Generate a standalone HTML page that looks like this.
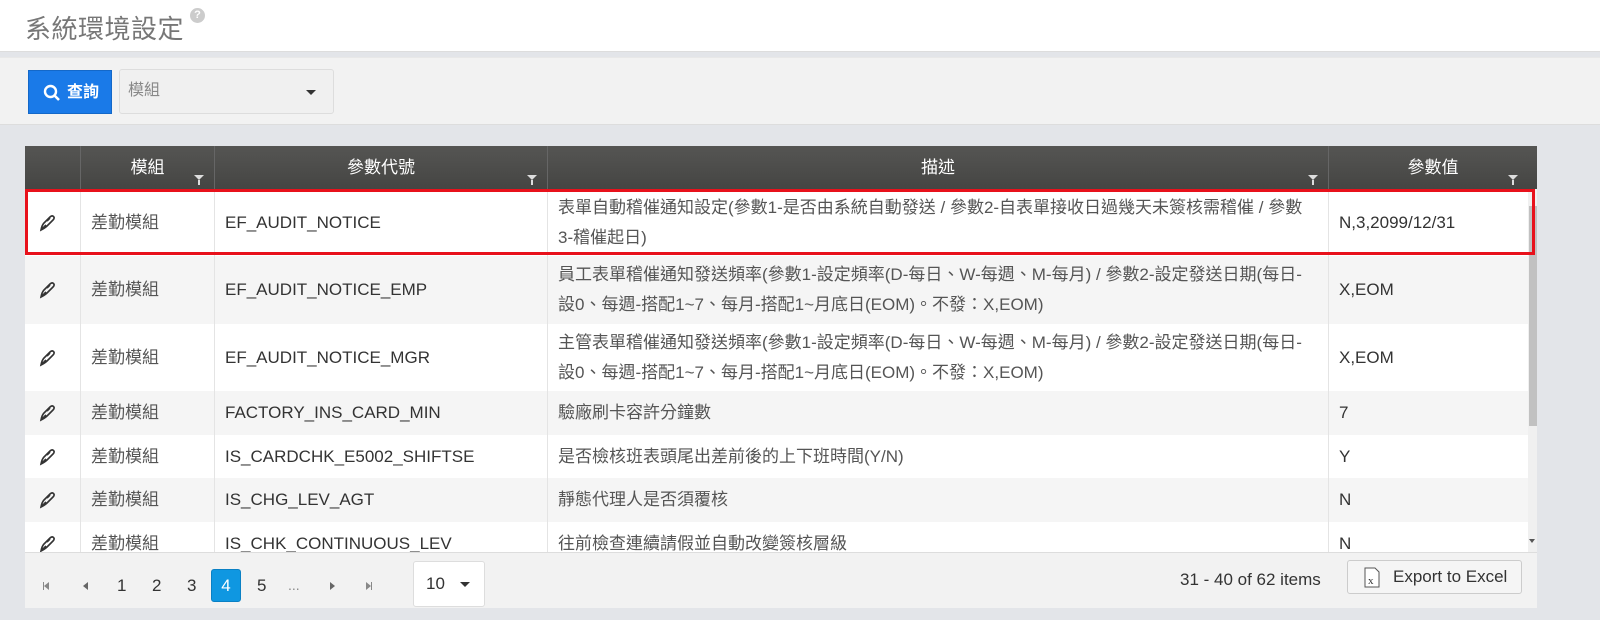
<!DOCTYPE html>
<html><head><meta charset="utf-8"><style>
*{box-sizing:border-box;margin:0;padding:0}
body{width:1600px;height:620px;overflow:hidden;background:#e3e5e9;font-family:"Liberation Sans","Noto Sans CJK TC",sans-serif;color:#333;position:relative}
.a{position:absolute}
.title{left:0;top:0;width:1600px;height:52px;background:#fff;border-bottom:1px solid #ddd}
.title h1{position:absolute;left:25px;top:9px;font-size:26px;font-weight:normal;color:#777;letter-spacing:0.5px}
.q{position:absolute;left:190px;top:8px;width:15px;height:15px;border-radius:50%;background:#ccc;color:#fff;font-size:11px;text-align:center;line-height:15px;font-weight:bold}
.tool{left:0;top:57px;width:1600px;height:68px;background:#f2f2f2;border-top:1px solid #e8e8e8;border-bottom:1px solid #ddd}
.btn{left:28px;top:70px;width:84px;height:44px;background:#1a7ae8;color:#fff;font-size:16px;font-weight:bold;line-height:44px;padding-left:38px;border:1px solid #1468c8}
.sel{left:119px;top:69px;width:215px;height:45px;background:#f0f0f0;border:1px solid #ddd;border-radius:3px;color:#888;font-size:16px;line-height:42px;padding-left:8px}
.caret{width:0;height:0;border-left:5px solid transparent;border-right:5px solid transparent;border-top:5px solid #333}
.grid{left:25px;top:146px;width:1512px;height:462px;background:#fff;overflow:hidden}
.hd{left:0;top:0;width:1512px;height:43px;background:linear-gradient(#555553,#454543)}
.hd div{position:absolute;top:0;height:43px;border-left:1px solid #666;color:#fff;font-size:17px;text-align:center;line-height:44px}
.f{position:absolute;bottom:9px;right:10px;width:0;height:0;border-left:5px solid transparent;border-right:5px solid transparent;border-top:5px solid #ddd}
.f:after{content:"";position:absolute;left:-1px;top:0;width:2px;height:5px;background:#ddd}
.row{position:absolute;left:0;width:1503px;font-size:17px}
.row div{position:absolute;top:0;height:100%;border-left:1px solid #e4e4e4;padding-left:10px;padding-right:14px;display:flex;align-items:center;line-height:30px}
.g{background:#f5f5f5}
.pg{left:0;top:406px;width:1512px;height:56px;background:#f2f2f2;border-top:1px solid #ddd;font-size:17px}
.sb{left:1503px;top:43px;width:9px;height:363px;background:#f0f0f0}
</style></head><body>
<div class="a title"><h1>系統環境設定</h1><div class="q">?</div></div>
<div class="a tool"></div>
<div class="a btn"><svg class="a" style="left:14px;top:13px" width="18" height="18" viewBox="0 0 18 18"><circle cx="7.5" cy="7.5" r="5.5" fill="none" stroke="#fff" stroke-width="2.4"/><path d="M11.5 11.5L16 16" stroke="#fff" stroke-width="2.6"/></svg>查詢</div>
<div class="a sel">模組<div class="a caret" style="left:186px;top:20px"></div></div>
<div class="a grid">
<div class="a hd">
<div style="left:0;width:55px;border-left:none"></div>
<div style="left:55px;width:134px">模組<span class="f"></span></div>
<div style="left:189px;width:333px">參數代號<span class="f"></span></div>
<div style="left:522px;width:781px">描述<span class="f"></span></div>
<div style="left:1303px;width:209px">參數值<span class="f" style="right:19px"></span></div>
</div>
<div class="a sb"><div class="a" style="left:1px;top:17px;width:8px;height:220px;background:#c1c1c1"></div><div class="a caret" style="left:1px;top:350px;border-top-color:#555;border-width:4px 3px 0 3px"></div></div>
<svg width="0" height="0" style="position:absolute"><symbol id="p" viewBox="0 0 20 20"><path d="M3 17Q4 12 6 10L12 4Q14 2 15.5 3.5Q17 5 15 7L9 13Q7 15 3 17Z M3 17L8 12 M9 8L12 5" fill="none" stroke="#333" stroke-width="1.6"/></symbol></svg>
<div class="row" style="top:43px;height:67px"><div style="left:0;border-left:none;padding-left:13px"><svg width="20" height="20"><use href="#p"/></svg></div><div style="left:55px;width:134px;color:#555">差勤模組</div><div style="left:189px;width:333px">EF_AUDIT_NOTICE</div><div style="left:522px;width:781px;color:#555">表單自動稽催通知設定(參數1-是否由系統自動發送 / 參數2-自表單接收日過幾天未簽核需稽催 / 參數3-稽催起日)</div><div style="left:1303px;width:200px">N,3,2099/12/31</div></div>
<div class="row g" style="top:110px;height:68px"><div style="left:0;border-left:none;padding-left:13px"><svg width="20" height="20"><use href="#p"/></svg></div><div style="left:55px;width:134px;color:#555">差勤模組</div><div style="left:189px;width:333px">EF_AUDIT_NOTICE_EMP</div><div style="left:522px;width:781px;color:#555">員工表單稽催通知發送頻率(參數1-設定頻率(D-每日、W-每週、M-每月) / 參數2-設定發送日期(每日-設0、每週-搭配1~7、每月-搭配1~月底日(EOM)。不發：X,EOM)</div><div style="left:1303px;width:200px">X,EOM</div></div>
<div class="row" style="top:178px;height:67px"><div style="left:0;border-left:none;padding-left:13px"><svg width="20" height="20"><use href="#p"/></svg></div><div style="left:55px;width:134px;color:#555">差勤模組</div><div style="left:189px;width:333px">EF_AUDIT_NOTICE_MGR</div><div style="left:522px;width:781px;color:#555">主管表單稽催通知發送頻率(參數1-設定頻率(D-每日、W-每週、M-每月) / 參數2-設定發送日期(每日-設0、每週-搭配1~7、每月-搭配1~月底日(EOM)。不發：X,EOM)</div><div style="left:1303px;width:200px">X,EOM</div></div>
<div class="row g" style="top:245px;height:44px"><div style="left:0;border-left:none;padding-left:13px"><svg width="20" height="20"><use href="#p"/></svg></div><div style="left:55px;width:134px;color:#555">差勤模組</div><div style="left:189px;width:333px">FACTORY_INS_CARD_MIN</div><div style="left:522px;width:781px;color:#555">驗廠刷卡容許分鐘數</div><div style="left:1303px;width:200px">7</div></div>
<div class="row" style="top:289px;height:43px"><div style="left:0;border-left:none;padding-left:13px"><svg width="20" height="20"><use href="#p"/></svg></div><div style="left:55px;width:134px;color:#555">差勤模組</div><div style="left:189px;width:333px">IS_CARDCHK_E5002_SHIFTSE</div><div style="left:522px;width:781px;color:#555">是否檢核班表頭尾出差前後的上下班時間(Y/N)</div><div style="left:1303px;width:200px">Y</div></div>
<div class="row g" style="top:332px;height:44px"><div style="left:0;border-left:none;padding-left:13px"><svg width="20" height="20"><use href="#p"/></svg></div><div style="left:55px;width:134px;color:#555">差勤模組</div><div style="left:189px;width:333px">IS_CHG_LEV_AGT</div><div style="left:522px;width:781px;color:#555">靜態代理人是否須覆核</div><div style="left:1303px;width:200px">N</div></div>
<div class="row" style="top:376px;height:44px"><div style="left:0;border-left:none;padding-left:13px"><svg width="20" height="20"><use href="#p"/></svg></div><div style="left:55px;width:134px;color:#555">差勤模組</div><div style="left:189px;width:333px">IS_CHK_CONTINUOUS_LEV</div><div style="left:522px;width:781px;color:#555">往前檢查連續請假並自動改變簽核層級</div><div style="left:1303px;width:200px">N</div></div>
<div class="a" style="left:0;top:43px;width:1510px;height:66px;border:3px solid #e8111b"></div>
<div class="a pg">
<div class="a" style="left:18px;top:29px;width:1px;height:8px;background:#888"></div><div class="a" style="left:19px;top:29px;border-top:4px solid transparent;border-bottom:4px solid transparent;border-right:5px solid #888"></div>
<div class="a" style="left:58px;top:29px;border-top:4px solid transparent;border-bottom:4px solid transparent;border-right:5px solid #666"></div>
<span class="a" style="left:92px;top:23px">1</span><span class="a" style="left:127px;top:23px">2</span><span class="a" style="left:162px;top:23px">3</span>
<div class="a" style="left:186px;top:16px;width:30px;height:33px;background:#0f97e1;border:1px solid #0a80c4;border-radius:3px;color:#fff;text-align:center;line-height:31px">4</div>
<span class="a" style="left:232px;top:23px">5</span><span class="a" style="left:263px;top:24px;color:#888;font-size:14px">...</span>
<div class="a" style="left:305px;top:29px;border-top:4px solid transparent;border-bottom:4px solid transparent;border-left:5px solid #666"></div>
<div class="a" style="left:341px;top:29px;border-top:4px solid transparent;border-bottom:4px solid transparent;border-left:5px solid #888"></div><div class="a" style="left:346px;top:29px;width:1px;height:8px;background:#888"></div>
<div class="a" style="left:388px;top:8px;width:72px;height:46px;background:#fff;border:1px solid #ddd;border-radius:3px;line-height:44px;padding-left:12px">10<div class="a caret" style="left:46px;top:20px"></div></div>
<span class="a" style="left:1155px;top:17px;color:#333">31 - 40 of 62 items</span>
<div class="a" style="left:1322px;top:7px;width:175px;height:34px;background:#f5f5f5;border:1px solid #ccc;border-radius:3px;font-size:17px;line-height:32px;padding-left:45px">Export to Excel
<svg class="a" style="left:16px;top:6px" width="16" height="21" viewBox="0 0 16 21"><path d="M1 1H11L15 5V20H1Z" fill="#fff" stroke="#555"/><text x="4" y="17" font-size="11" font-family="Liberation Serif" fill="#333">x</text></svg></div>
</div>
</div>
</body></html>
